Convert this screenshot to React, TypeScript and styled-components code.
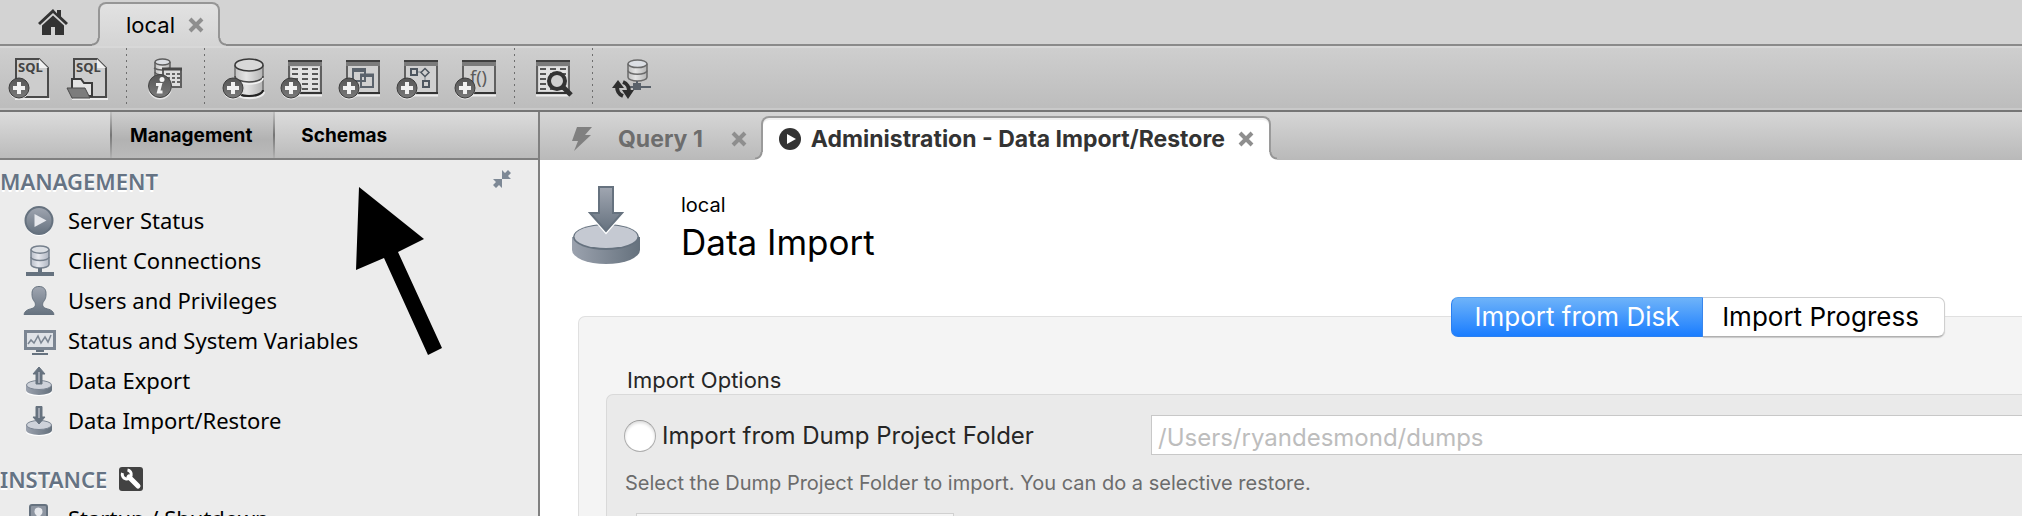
import React from "react";
import styled, { createGlobalStyle, css } from "styled-components";

const sans = `Inter, "Liberation Sans", sans-serif`;
const humanist = `"Noto Sans", "Open Sans", sans-serif`;

const GlobalStyle = createGlobalStyle`
  *, *::before, *::after { box-sizing: border-box; }
  body { margin: 0; background: #fff; font-family: ${sans}; color: #000; }
  button, input { font: inherit; color: inherit; margin: 0; }
  button { border: 0; padding: 0; background: none; cursor: pointer; }
  h1, h2, p, ul { margin: 0; padding: 0; font-weight: inherit; }
  svg { display: block; flex: none; }
`;

/* ---------- window chrome ---------- */

const Window = styled.div`
  display: flex;
  flex-direction: column;
  height: 100vh;
  overflow: hidden;
`;

const ConnectionBar = styled.header`
  display: flex;
  align-items: flex-end;
  height: 46px;
  flex: none;
  background: #d3d3d3;
  border-bottom: 2px solid #8a8a8a;
`;

const HomeButton = styled.button`
  height: 44px;
  padding: 0 30px 0 38px;
`;

const flare = (outer: string, line: string, inner: string) => css`
  &::before,
  &::after {
    content: "";
    position: absolute;
    bottom: 0;
    width: 8px;
    height: 8px;
  }
  &::before {
    left: -8px;
    background: radial-gradient(circle at 0 0, ${outer} 5px, ${line} 6px, ${line} 7px, ${inner} 8px);
  }
  &::after {
    right: -8px;
    background: radial-gradient(circle at 100% 0, ${outer} 5px, ${line} 6px, ${line} 7px, ${inner} 8px);
  }
`;

const ConnectionTab = styled.div`
  position: relative;
  display: flex;
  align-items: center;
  gap: 13px;
  height: 44px;
  margin-bottom: -2px;
  padding: 0 14px 0 26px;
  font-size: 22px;
  line-height: 36px;
  background: linear-gradient(#e2e2e2, #d4d4d4);
  border: 2px solid #969696;
  border-bottom: 0;
  border-radius: 8px 8px 0 0;
  ${flare("#d3d3d3", "#8e8e8e", "#d4d4d4")}
`;

const ToolbarRow = styled.div`
  display: flex;
  align-items: center;
  flex: none;
  height: 66px;
  background: linear-gradient(#cfcfcf, #bcbcbc);
  border-bottom: 2px solid #767676;
  box-shadow: inset 0 2px 0 #d8d8d8, inset 0 -2px 0 #c9c9c9;
`;

const ToolButton = styled.button`
  padding: 0 5px;
`;

const ToolSeparator = styled.div`
  flex: none;
  width: 20px;
  height: 60px;
  background: repeating-linear-gradient(#6e6e6e 0 2px, transparent 2px 6px) center / 1px 100% no-repeat;
`;

const Body = styled.div`
  display: flex;
  flex: 1;
  min-height: 0;
`;

/* ---------- sidebar ---------- */

const Sidebar = styled.aside`
  position: relative;
  display: flex;
  flex-direction: column;
  flex: none;
  width: 540px;
  background: #ececec;
  border-right: 2px solid #808080;
`;

const SidebarTabs = styled.div`
  display: flex;
  flex: none;
  height: 48px;
  padding-left: 110px;
  background: linear-gradient(#dcdcdc, #bbbbbb);
  border-bottom: 2px solid #808080;
`;

const SidebarTab = styled.button<{ $active?: boolean }>`
  padding: 2px 24px 0 26px;
  font-size: 19px;
  line-height: 44px;
  font-weight: 700;
  ${(p) =>
    p.$active &&
    css`
      border-style: solid;
      border-width: 0 2px;
      border-image: linear-gradient(#c4c4c4, #757575 50%, #b4b4b4) 1;
      padding: 2px 21px 0 18px;
      background: linear-gradient(#cecece, #b2b2b2 60%, #bababa);
    `}
`;

const SidebarSection = styled.section`
  font-family: ${humanist};
  font-size: 22px;
  padding-top: 2px;
  & + & {
    padding-top: 20px;
  }
`;

const SectionTitle = styled.h2`
  display: flex;
  align-items: center;
  gap: 12px;
  height: 38px;
  padding-right: 27px;
  font-size: 22px;
  font-weight: 600;
  color: #657384;
  text-shadow: 0 2px 0 #fff;
`;

const CollapseButton = styled.button`
  margin-left: auto;
  padding-bottom: 4px;
`;

const NavList = styled.ul`
  list-style: none;
`;

const NavLink = styled.a`
  display: flex;
  align-items: center;
  gap: 11px;
  height: 40px;
  padding-left: 23px;
  color: #000;
  text-decoration: none;
  white-space: nowrap;
`;

const Pointer = styled.svg`
  position: absolute;
  left: 356px;
  top: 75px;
`;

/* ---------- main area ---------- */

const Main = styled.main`
  flex: 1;
  min-width: 0;
  background: #fff;
`;

const EditorTabs = styled.div`
  display: flex;
  align-items: flex-end;
  height: 48px;
  background: linear-gradient(#d6d6d6, #b9b9b9);
`;

const EditorTab = styled.div<{ $active?: boolean }>`
  position: relative;
  display: flex;
  align-items: center;
  height: 44px;
  font-size: 23px;
  line-height: 40px;
  font-weight: 700;
  white-space: nowrap;
  ${(p) =>
    p.$active
      ? css`
          gap: 10px;
          padding: 0 15px 0 16px;
          color: #333;
          background: #fff;
          border: 2px solid #9a9a9a;
          border-bottom: 0;
          border-radius: 8px 8px 0 0;
          box-shadow: inset 0 2px 0 #f0f0f0;
          ${flare("transparent", "#959595", "#fff")}
        `
      : css`
          gap: 25px;
          padding: 2px 14px 0 31px;
          color: #6d6d6d;
        `}
`;

const EditorTabTitle = styled.span`
  margin-right: 3px;
`;

const PageHeader = styled.div`
  display: flex;
  gap: 41px;
  padding: 24px 32px 0;
`;

const HeaderText = styled.div`
  display: flex;
  flex-direction: column;
  gap: 4px;
  padding-top: 9px;
`;

const ConnectionName = styled.p`
  font-size: 20px;
  line-height: 24px;
`;

const PageTitle = styled.h1`
  font-size: 35px;
  line-height: 43px;
`;

const TabFrame = styled.div`
  margin: 33px 0 0 38px;
`;

const Segments = styled.div`
  position: relative;
  display: flex;
  justify-content: flex-end;
  padding-right: 77px;
`;

const Segment = styled.button<{ $active?: boolean }>`
  height: 40px;
  font-size: 26px;
  line-height: 38px;
  white-space: nowrap;
  ${(p) =>
    p.$active
      ? css`
          width: 252px;
          color: #fff;
          background: linear-gradient(#6eb3f9, #1a7dff);
          border: 1px solid #2a7ff0;
          border-top-color: #5aa3f0;
          border-radius: 7px 0 0 7px;
        `
      : css`
          width: 242px;
          padding-right: 6px;
          background: #fff;
          border: 1px solid #cfcfcf;
          border-left: 0;
          border-bottom-color: #b0b0b0;
          border-radius: 0 7px 7px 0;
          box-shadow: 0 1px 1px #c8c8c8;
        `}
`;

const Panel = styled.div`
  margin-top: -21px;
  padding: 49px 0 0 27px;
  min-height: 220px;
  background: #f4f4f4;
  border: 1px solid #e0e0e0;
  border-right: 0;
  border-radius: 7px 0 0 0;
`;

const GroupLabel = styled.h2`
  padding: 1px 0 0 21px;
  font-size: 22px;
  line-height: 27px;
  color: #262626;
`;

const GroupBox = styled.div`
  padding: 20px 0 0 17px;
  min-height: 140px;
  background: #eaeaea;
  border: 1px solid #d9d9d9;
  border-right: 0;
  border-radius: 7px 0 0 0;
`;

const OptionRow = styled.div`
  display: flex;
  align-items: center;
`;

const RadioLabel = styled.label`
  display: flex;
  align-items: center;
  gap: 6px;
  flex: none;
  width: 527px;
  padding-top: 2px;
  font-size: 24px;
  line-height: 38px;
  color: #262626;
`;

const Radio = styled.input`
  appearance: none;
  width: 32px;
  height: 32px;
  border: 1px solid #adadad;
  border-top-color: #999;
  border-radius: 50%;
  background: #fff;
  box-shadow: inset 0 2px 3px #ddd;
`;

const PathInput = styled.input`
  flex: 1;
  min-width: 0;
  height: 40px;
  padding: 4px 6px 0;
  font-size: 24px;
  background: #fff;
  border: 1px solid #c8c8c8;
  border-right: 0;
  border-radius: 0;
  outline: none;
  &::placeholder {
    color: #bdbdbd;
    opacity: 1;
  }
`;

const Hint = styled.p`
  margin-top: 14px;
  padding-left: 1px;
  font-size: 20px;
  line-height: 28px;
  color: #6c6c6c;
`;

const SchemaList = styled.div`
  width: 318px;
  height: 40px;
  margin: 16px 0 0 12px;
  background: #f5f5f5;
  border: 1px solid #d0d0d0;
`;

/* ---------- icons ---------- */

const CloseIcon = ({ color = "#8e8e8e" }: { color?: string }) => (
  <svg width="16" height="16" viewBox="0 0 16 16">
    <path d="M2 2 14 14M14 2 2 14" stroke={color} strokeWidth="4" />
  </svg>
);

const HomeIcon = () => (
  <svg width="30" height="26" viewBox="0 0 30 26" fill="#333">
    <path d="M15 0 0 14l2 2L15 4l13 12 2-2-7-6.500V1h-4v3.500z" />
    <path d="M15 6.500 4 16.500V26h9v-8h4v8h9v-9.500z" />
  </svg>
);

const ToolGlyph = ({ children }: { children: React.ReactNode }) => (
  <svg width="48" height="48" viewBox="0 0 48 48" fill="none">
    {children}
  </svg>
);

const PlusBadge = () => (
  <g>
    <circle cx="14" cy="35.500" r="10" fill="#e6e6e6" />
    <circle cx="14" cy="34" r="10" fill="url(#badge)" stroke="#3c3c3c" />
    <path d="M14 28v12M8 34h12" stroke="#f2f2f2" strokeWidth="4" />
  </g>
);

const SqlPage = () => (
  <g>
    <path d="M10 45H45" stroke="#ececec" strokeWidth="2" />
    <path d="M11 5H34L43 14V43H11z" fill="#cdcdcd" stroke="#4a4a4a" strokeWidth="2" />
    <path d="M34 5v9h9z" fill="#f0f0f0" />
    <text x="13" y="18" fontFamily="Noto Sans" fontWeight="700" fontSize="13" fill="#444">
      SQL
    </text>
  </g>
);

const WindowFrame = ({ x = 11 }: { x?: number }) => (
  <g transform={`translate(${x} 6)`}>
    <path d="M0 35.500H34" stroke="#ececec" strokeWidth="2" />
    <rect x="1" y="1" width="32" height="32" fill="#d0d0d0" stroke="#606060" strokeWidth="2" />
    <path d="M0 1H34" stroke="#3f3f3f" strokeWidth="2" />
    <path d="M0 4H34" stroke="#7b7b7b" strokeWidth="4" />
    <path d="M0 33H34" stroke="#333" strokeWidth="2" />
  </g>
);

const TableLines = ({ x = 11 }: { x?: number }) => (
  <g transform={`translate(${x} 6)`}>
    <rect x="3" y="7" width="28" height="24" fill="#e2e2e2" />
    {[9, 14, 19, 24, 29].map((y) => (
      <path key={y} d={`M4 ${y}h6M14 ${y}h6M24 ${y}h6`} stroke="#575757" strokeWidth="2" />
    ))}
  </g>
);

const Cylinder = ({ x, y, w, h, line, fill }: { x: number; y: number; w: number; h: number; line: string; fill: string }) => {
  const r = w / 2;
  const e = w / 5;
  const arc = (yy: number) => `M${x} ${yy}a${r} ${e} 0 0 0 ${w} 0`;
  return (
    <g stroke={line} strokeWidth="1.500">
      <path d={`M${x} ${y + e}V${y + h - e}a${r} ${e} 0 0 0 ${w} 0V${y + e}`} fill={fill} />
      <path d={arc(y + h / 2)} fill="none" />
      <ellipse cx={x + r} cy={y + e} rx={r} ry={e} fill="#dcdfe4" />
    </g>
  );
};

const DefsHolder = styled.svg`
  position: absolute;
`;

const SvgDefs = () => (
  <DefsHolder width="0" height="0" aria-hidden="true">
    <defs>
      <linearGradient id="badge" x2="0" y2="1">
        <stop stopColor="#555" />
        <stop offset="1" stopColor="#7a7a7a" />
      </linearGradient>
      <linearGradient id="silver">
        <stop stopColor="#c2c2c2" />
        <stop offset=".4" stopColor="#e4e4e4" />
        <stop offset="1" stopColor="#b4b4b4" />
      </linearGradient>
      <linearGradient id="slate" x2="0" y2="1">
        <stop stopColor="#a0a6b1" />
        <stop offset="1" stopColor="#66727f" />
      </linearGradient>
      <linearGradient id="slateSide">
        <stop stopColor="#9ba2ae" />
        <stop offset="1" stopColor="#65717d" />
      </linearGradient>
      <linearGradient id="cool">
        <stop stopColor="#b9bec9" />
        <stop offset=".4" stopColor="#e6e8ee" />
        <stop offset="1" stopColor="#b0b6c2" />
      </linearGradient>
    </defs>
  </DefsHolder>
);

const NewSqlIcon = () => (
  <ToolGlyph>
    <SqlPage />
    <PlusBadge />
  </ToolGlyph>
);

const OpenSqlIcon = () => (
  <ToolGlyph>
    <SqlPage />
    <path d="M9 42V25h9l3 4h8v13z" fill="#e4e4e4" stroke="#3c3c3c" strokeWidth="2" />
    <path d="M4 34H22l5 10H9z" fill="#7c7c7c" stroke="#4b4b4b" />
    <path d="M9 45.500H28" stroke="#ececec" />
  </ToolGlyph>
);

const InspectorIcon = () => (
  <ToolGlyph>
    <Cylinder x={14} y={5} w={15} h={26} line="#5d5d5d" fill="url(#silver)" />
    <path d="M13 14q7 4 16 0" stroke="#5d5d5d" strokeWidth="1.500" />
    <rect x="22" y="15" width="18" height="18" fill="#dedede" stroke="#606060" strokeWidth="2" />
    <path d="M21 15H41" stroke="#484848" strokeWidth="3" />
    <path d="M25 20h4M31 20h3M36 20h3M25 24h4M31 24h3M36 24h3M25 28h4M31 28h3M36 28h3" stroke="#666" strokeWidth="2" />
    <circle cx="19" cy="33.500" r="12" fill="#e6e6e6" />
    <circle cx="19" cy="32" r="11.500" fill="url(#badge)" stroke="#444" />
    <circle cx="21" cy="25.500" r="2.500" fill="#f4f4f4" />
    <path d="M15 30.500h4.500L17.500 38h4" stroke="#f4f4f4" strokeWidth="3" />
  </ToolGlyph>
);

const NewSchemaIcon = () => (
  <ToolGlyph>
    <path d="M16 38a14 6 0 0 0 29 0" stroke="#ececec" strokeWidth="2" />
    <path d="M16 11V36a14 6 0 0 0 28 0V11" fill="url(#silver)" stroke="#6f6f6f" strokeWidth="1.500" />
    <path d="M16 36a14 6 0 0 0 28 0" stroke="#222" strokeWidth="2" />
    <path d="M16 22a14 6 0 0 0 28 0" stroke="#4b4b4b" strokeWidth="1.500" />
    <path d="M16 24a14 6 0 0 0 28 0" stroke="#f2f2f2" strokeWidth="1.500" />
    <ellipse cx="30" cy="11" rx="14" ry="6" fill="#d8d8d8" stroke="#383838" strokeWidth="1.500" />
    <PlusBadge />
  </ToolGlyph>
);

const NewTableIcon = () => (
  <ToolGlyph>
    <WindowFrame />
    <TableLines />
    <PlusBadge />
  </ToolGlyph>
);

const NewViewIcon = () => (
  <ToolGlyph>
    <WindowFrame />
    <rect x="18" y="16" width="12" height="11" stroke="#5b636c" strokeWidth="2" />
    <path d="M17 16H31" stroke="#5b636c" strokeWidth="4" />
    <rect x="26" y="22" width="12" height="11" stroke="#5b636c" strokeWidth="2" />
    <path d="M25 21H39" stroke="#5b636c" strokeWidth="3" />
    <PlusBadge />
  </ToolGlyph>
);

const NewRoutineIcon = () => (
  <ToolGlyph>
    <WindowFrame />
    <path d="M24 18h5M32 22v5" stroke="#7b828a" />
    <rect x="18" y="15" width="6" height="6" stroke="#4e565f" strokeWidth="2" />
    <path d="M32 14.500 36 18.500 32 22.500 28 18.500z" stroke="#4e565f" strokeWidth="1.500" />
    <rect x="30" y="27" width="6" height="6" stroke="#4e565f" strokeWidth="2" />
    <PlusBadge />
  </ToolGlyph>
);

const NewFunctionIcon = () => (
  <ToolGlyph>
    <WindowFrame />
    <text x="19" y="30" fontFamily="Noto Sans" fontSize="18" fill="#5b5b5b">
      f()
    </text>
    <PlusBadge />
  </ToolGlyph>
);

const SearchDataIcon = () => (
  <ToolGlyph>
    <WindowFrame x={7} />
    <TableLines x={7} />
    <circle cx="28" cy="27" r="8" fill="#cfcfcf" stroke="#333" strokeWidth="4" />
    <path d="m33 32 9 9" stroke="#333" strokeWidth="5" />
  </ToolGlyph>
);

const ReconnectIcon = () => (
  <ToolGlyph>
    <Cylinder x={21} y={6} w={19} h={21} line="#6a6a6a" fill="url(#silver)" />
    <path d="M30 27v5M22 33H44" stroke="#59616a" strokeWidth="2" />
    <rect x="26" y="29" width="8" height="7" fill="#59616a" />
    <path d="M10 32c0 5 1 8 6 10M22 38c0-5-1-8-6-10" stroke="#2e2e2e" strokeWidth="4" />
    <path d="M5 34 11 26 17 34zM15 36h12l-6 9z" fill="#2e2e2e" />
  </ToolGlyph>
);

const NavGlyph = ({ children }: { children: React.ReactNode }) => (
  <svg width="34" height="32" viewBox="0 0 34 32" fill="none">
    {children}
  </svg>
);

const StatusIcon = () => (
  <NavGlyph>
    <circle cx="16" cy="18" r="14" fill="#fff" />
    <circle cx="16" cy="16.500" r="13.500" fill="url(#slate)" stroke="#66727f" strokeWidth="2" />
    <path d="M11.500 10v13l12-6.500z" fill="#e6e8ec" />
  </NavGlyph>
);

const ClientIcon = () => (
  <NavGlyph>
    <Cylinder x={8} y={2} w={18} h={22} line="#76808d" fill="url(#cool)" />
    <path d="M17 24v6" stroke="#66727f" strokeWidth="4" />
    <path d="M3 32.500H31" stroke="#fff" strokeWidth="1" />
    <path d="M3 30H31" stroke="#66727f" strokeWidth="4" />
  </NavGlyph>
);

const UserIcon = () => (
  <NavGlyph>
    <path
      d="M16 2.500c-5 0-7 3-7 7 0 5 1 6 3 9 1 3 0 5-3 6-4 1-7 2-8 6H31c-1-4-4-5-8-6-3-1-4-3-3-6 2-3 3-4 3-9 0-4-2-7-7-7z"
      fill="url(#slate)"
      stroke="#66727f"
    />
  </NavGlyph>
);

const MonitorIcon = () => (
  <NavGlyph>
    <rect x="2.500" y="7.500" width="29" height="17" fill="#dfe2e7" stroke="#7b8592" strokeWidth="3" />
    <path d="m5 20 3-4 3 3 4-7 3 7 4-6 3 5 3-7" stroke="#7b8592" strokeWidth="1.500" />
    <path d="M13 27h8M9 30h16" stroke="#66727f" strokeWidth="2" />
  </NavGlyph>
);

const Disc = () => (
  <g>
    <path d="M3 23v5a13 4 0 0 0 26 0v-5" fill="#fff" />
    <path d="M3 21v5a13 5 0 0 0 26 0v-5" fill="url(#slateSide)" />
    <ellipse cx="16" cy="21" rx="12.500" ry="4.500" fill="#ced2da" stroke="#7b8592" />
  </g>
);

const ExportIcon = () => (
  <NavGlyph>
    <Disc />
    <path d="M16 3 22 10h-3v10h-6V10h-3z" fill="#66727f" stroke="#66727f" />
    <path d="M16 8v11" stroke="#a0a6b1" strokeWidth="2" />
  </NavGlyph>
);

const ImportIcon = () => (
  <NavGlyph>
    <Disc />
    <path d="M13 2.500h6V13h3L16 20 10 13h3z" fill="#66727f" stroke="#66727f" />
    <path d="M16 4v10" stroke="#a0a6b1" strokeWidth="2" />
  </NavGlyph>
);

const PowerIcon = () => (
  <NavGlyph>
    <rect x="7" y="3" width="17" height="28" rx="2" fill="#8d95a1" stroke="#66727f" strokeWidth="2" />
    <circle cx="15.500" cy="9.500" r="4" fill="#e6e8ec" />
    <path d="M15.500 10v12" stroke="#e6e8ec" strokeWidth="4" />
  </NavGlyph>
);

const CollapseIcon = () => (
  <svg width="18" height="18" viewBox="0 0 18 18" fill="#7d8895">
    <path d="M9 9V0l3 3 3-3 3 3-3 3 3 3zM9 9v9l-3-3-3 3-3-3 3-3-3-3z" />
  </svg>
);

const WrenchIcon = () => (
  <svg width="24" height="24" viewBox="0 0 24 24" fill="none">
    <rect width="24" height="24" rx="3" fill="#424242" />
    <path d="m10 10 9 9" stroke="#fff" strokeWidth="5" strokeLinecap="round" />
    <path d="M3.500 6a4.500 4.500 0 1 0 5-3" stroke="#fff" strokeWidth="3" />
  </svg>
);

const BoltIcon = () => (
  <svg width="22" height="24" viewBox="0 0 22 24" fill="#808080">
    <path d="M6 0H21L14 8h6L3 24 7 14H1z" />
  </svg>
);

const PlayIcon = () => (
  <svg width="22" height="22" viewBox="0 0 22 22">
    <circle cx="11" cy="11" r="11" fill="#333" />
    <path d="M8 6v10l9-5z" fill="#fff" />
  </svg>
);

const DataImportIcon = () => (
  <svg width="68" height="80" viewBox="0 0 68 80">
    <path d="M0 53V66a34 14 0 0 0 68 0V53z" fill="url(#slateSide)" />
    <ellipse cx="34" cy="53" rx="33" ry="13" fill="#66727f" />
    <ellipse cx="34" cy="52.500" rx="31.500" ry="11.500" fill="#c5c9d2" />
    <path d="M27 3H41V29H50L34 47.500 18 29H27z" fill="none" stroke="#fff" strokeWidth="4" />
    <path d="M27 3H41V29H50L34 47 18 29H27z" fill="url(#slate)" stroke="#66727f" strokeWidth="2" />
  </svg>
);

/* ---------- screen ---------- */

const toolGroups = [
  [
    { label: "New SQL tab", Icon: NewSqlIcon },
    { label: "Open SQL script", Icon: OpenSqlIcon },
  ],
  [{ label: "Inspector", Icon: InspectorIcon }],
  [
    { label: "New schema", Icon: NewSchemaIcon },
    { label: "New table", Icon: NewTableIcon },
    { label: "New view", Icon: NewViewIcon },
    { label: "New procedure", Icon: NewRoutineIcon },
    { label: "New function", Icon: NewFunctionIcon },
  ],
  [{ label: "Search table data", Icon: SearchDataIcon }],
  [{ label: "Reconnect", Icon: ReconnectIcon }],
];

const managementItems = [
  { label: "Server Status", Icon: StatusIcon },
  { label: "Client Connections", Icon: ClientIcon },
  { label: "Users and Privileges", Icon: UserIcon },
  { label: "Status and System Variables", Icon: MonitorIcon },
  { label: "Data Export", Icon: ExportIcon },
  { label: "Data Import/Restore", Icon: ImportIcon },
];

const instanceItems = [{ label: "Startup / Shutdown", Icon: PowerIcon }];

const NavItems = ({ items }: { items: typeof managementItems }) => (
  <NavList>
    {items.map(({ label, Icon }) => (
      <li key={label}>
        <NavLink href="#">
          <Icon />
          {label}
        </NavLink>
      </li>
    ))}
  </NavList>
);

export default function App() {
  return (
    <Window>
      <GlobalStyle />
      <SvgDefs />
      <ConnectionBar>
        <HomeButton aria-label="Home">
          <HomeIcon />
        </HomeButton>
        <ConnectionTab>
          local
          <button aria-label="Close connection">
            <CloseIcon />
          </button>
        </ConnectionTab>
      </ConnectionBar>

      <ToolbarRow>
        {toolGroups.map((group, i) => (
          <React.Fragment key={i}>
            {i > 0 && <ToolSeparator />}
            {group.map(({ label, Icon }) => (
              <ToolButton key={label} aria-label={label}>
                <Icon />
              </ToolButton>
            ))}
          </React.Fragment>
        ))}
      </ToolbarRow>

      <Body>
        <Sidebar>
          <SidebarTabs>
            <SidebarTab $active>Management</SidebarTab>
            <SidebarTab>Schemas</SidebarTab>
          </SidebarTabs>
          <SidebarSection>
            <SectionTitle>
              MANAGEMENT
              <CollapseButton aria-label="Collapse">
                <CollapseIcon />
              </CollapseButton>
            </SectionTitle>
            <NavItems items={managementItems} />
          </SidebarSection>
          <SidebarSection>
            <SectionTitle>
              INSTANCE
              <WrenchIcon />
            </SectionTitle>
            <NavItems items={instanceItems} />
          </SidebarSection>
          <Pointer width="88" height="170" viewBox="0 0 88 170">
            <path d="M3 0 68 52 42 65 86 161 72 168 28 71 0 83z" />
          </Pointer>
        </Sidebar>

        <Main>
          <EditorTabs>
            <EditorTab>
              <BoltIcon />
              <EditorTabTitle>Query 1</EditorTabTitle>
              <button aria-label="Close Query 1">
                <CloseIcon />
              </button>
            </EditorTab>
            <EditorTab $active>
              <PlayIcon />
              <EditorTabTitle>Administration - Data Import/Restore</EditorTabTitle>
              <button aria-label="Close Administration">
                <CloseIcon />
              </button>
            </EditorTab>
          </EditorTabs>

          <PageHeader>
            <DataImportIcon />
            <HeaderText>
              <ConnectionName>local</ConnectionName>
              <PageTitle>Data Import</PageTitle>
            </HeaderText>
          </PageHeader>

          <TabFrame>
            <Segments>
              <Segment $active>Import from Disk</Segment>
              <Segment>Import Progress</Segment>
            </Segments>
            <Panel>
              <GroupLabel>Import Options</GroupLabel>
              <GroupBox>
                <OptionRow>
                  <RadioLabel>
                    <Radio type="radio" name="source" />
                    Import from Dump Project Folder
                  </RadioLabel>
                  <PathInput aria-label="Dump project folder" placeholder="/Users/ryandesmond/dumps" />
                </OptionRow>
                <Hint>Select the Dump Project Folder to import. You can do a selective restore.</Hint>
                <SchemaList />
              </GroupBox>
            </Panel>
          </TabFrame>
        </Main>
      </Body>
    </Window>
  );
}
